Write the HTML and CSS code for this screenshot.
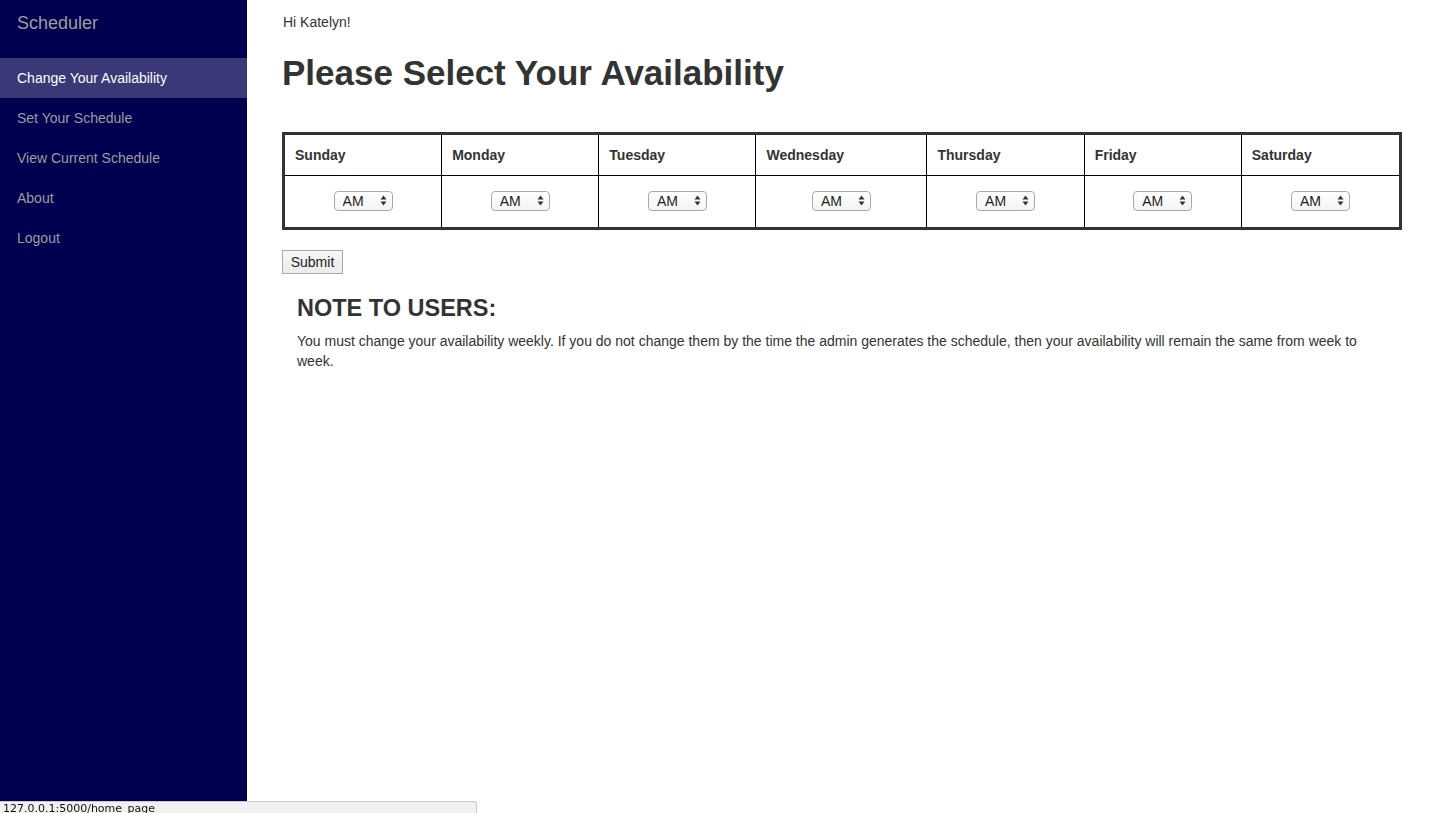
FILE: index.html
```html
<!DOCTYPE html>
<html>
<head>
<meta charset="utf-8">
<title>Scheduler</title>
<link rel="stylesheet" href="styles.css">
</head>
<body>
<div class="layout">
  <nav class="sidebar">
    <div class="brand">Scheduler</div>
    <ul class="nav">
      <li class="nav-item active">Change Your Availability</li>
      <li class="nav-item">Set Your Schedule</li>
      <li class="nav-item">View Current Schedule</li>
      <li class="nav-item">About</li>
      <li class="nav-item">Logout</li>
    </ul>
  </nav>
  <main class="main">
    <p class="greeting">Hi Katelyn!</p>
    <h1 class="title">Please Select Your Availability</h1>
    <form class="form">
      <table class="avail">
        <colgroup>
          <col class="c"><col class="c"><col class="c"><col class="c-wide"><col class="c"><col class="c"><col class="c">
        </colgroup>
        <thead>
          <tr>
            <th>Sunday</th><th>Monday</th><th>Tuesday</th><th>Wednesday</th><th>Thursday</th><th>Friday</th><th>Saturday</th>
          </tr>
        </thead>
        <tbody>
          <tr>
            <td><span class="sel"><select><option>AM</option><option>PM</option></select><svg class="arrows" viewBox="0 0 7 11" width="7" height="11"><path d="M3.5 0.5 L6.5 4.5 L0.5 4.5 Z M3.5 10.5 L6.5 6.5 L0.5 6.5 Z" fill="#333"/></svg></span></td>
            <td><span class="sel"><select><option>AM</option><option>PM</option></select><svg class="arrows" viewBox="0 0 7 11" width="7" height="11"><path d="M3.5 0.5 L6.5 4.5 L0.5 4.5 Z M3.5 10.5 L6.5 6.5 L0.5 6.5 Z" fill="#333"/></svg></span></td>
            <td><span class="sel"><select><option>AM</option><option>PM</option></select><svg class="arrows" viewBox="0 0 7 11" width="7" height="11"><path d="M3.5 0.5 L6.5 4.5 L0.5 4.5 Z M3.5 10.5 L6.5 6.5 L0.5 6.5 Z" fill="#333"/></svg></span></td>
            <td><span class="sel"><select><option>AM</option><option>PM</option></select><svg class="arrows" viewBox="0 0 7 11" width="7" height="11"><path d="M3.5 0.5 L6.5 4.5 L0.5 4.5 Z M3.5 10.5 L6.5 6.5 L0.5 6.5 Z" fill="#333"/></svg></span></td>
            <td><span class="sel"><select><option>AM</option><option>PM</option></select><svg class="arrows" viewBox="0 0 7 11" width="7" height="11"><path d="M3.5 0.5 L6.5 4.5 L0.5 4.5 Z M3.5 10.5 L6.5 6.5 L0.5 6.5 Z" fill="#333"/></svg></span></td>
            <td><span class="sel"><select><option>AM</option><option>PM</option></select><svg class="arrows" viewBox="0 0 7 11" width="7" height="11"><path d="M3.5 0.5 L6.5 4.5 L0.5 4.5 Z M3.5 10.5 L6.5 6.5 L0.5 6.5 Z" fill="#333"/></svg></span></td>
            <td><span class="sel"><select><option>AM</option><option>PM</option></select><svg class="arrows" viewBox="0 0 7 11" width="7" height="11"><path d="M3.5 0.5 L6.5 4.5 L0.5 4.5 Z M3.5 10.5 L6.5 6.5 L0.5 6.5 Z" fill="#333"/></svg></span></td>
          </tr>
        </tbody>
      </table>
      <button type="button" class="submit">Submit</button>
    </form>
    <section class="note">
      <h3 class="note-title">NOTE TO USERS:</h3>
      <p class="note-text">You must change your availability weekly. If you do not change them by the time the admin generates the schedule, then your availability will remain the same from week to week.</p>
    </section>
  </main>
</div>
<div class="statusbar">127.0.0.1:5000/home_page</div>
</body>
</html>
```

FILE: styles.css
```css
* { box-sizing: border-box; }
html, body { height: 100%; }
body {
  margin: 0;
  font-family: "Liberation Sans", Arial, Helvetica, sans-serif;
  font-size: 14px;
  line-height: 20px;
  color: #333;
  background: #fff;
}
.layout {
  display: flex;
  min-height: 100vh;
}
.sidebar {
  width: 247px;
  flex: 0 0 247px;
  background: #000050;
}
.brand {
  color: #9d9d9d;
  font-size: 18px;
  line-height: 20px;
  padding: 13px 17px 0;
  height: 58px;
}
.nav {
  list-style: none;
  margin: 0;
  padding: 0;
}
.nav-item {
  color: #9d9d9d;
  padding: 10px 17px;
  line-height: 20px;
  font-size: 14px;
}
.nav-item.active {
  color: #fff;
  background: #3a3876;
}
.main {
  flex: 1;
  padding: 12px 34px 0 35px;
}
.greeting {
  margin: 0 1px;
  font-size: 14px;
  line-height: 20px;
}
.title {
  margin: 21px 0 39px;
  font-size: 35px;
  line-height: 40px;
  font-weight: bold;
  color: #333;
}
.form { margin: 0; }
.avail {
  width: 100%;
  table-layout: fixed;
  border-collapse: separate;
  border-spacing: 0;
  border: 3px solid #333;
}
.c-wide { width: 171px; }
.avail th {
  text-align: left;
  font-weight: bold;
  font-size: 14px;
  line-height: 20px;
  padding: 10px 10px;
  border-right: 1px solid #000;
  border-bottom: 1px solid #000;
}
.avail td {
  text-align: center;
  padding: 14px 10px 16px;
  border-right: 1px solid #000;
  line-height: 20px;
}
.avail th:last-child, .avail td:last-child { border-right: none; }
.sel {
  position: relative;
  display: inline-block;
  vertical-align: middle;
  width: 59px;
  height: 20px;
}
.sel select {
  -webkit-appearance: none;
  appearance: none;
  width: 59px;
  height: 20px;
  margin: 0;
  padding: 0 0 0 8px;
  border: 1px solid #a9a9a9;
  border-radius: 4px;
  background: linear-gradient(#ffffff, #f4f4f4);
  font-family: "Liberation Sans", Arial, Helvetica, sans-serif;
  font-size: 14px;
  color: #222;
  line-height: 18px;
}
.arrows {
  position: absolute;
  right: 6px;
  top: 4px;
  pointer-events: none;
}
.submit {
  display: block;
  margin: 20px 0 0;
  width: 61px;
  height: 24px;
  padding: 0;
  font-family: "Liberation Sans", Arial, Helvetica, sans-serif;
  font-size: 14px;
  color: #222;
  background: linear-gradient(#f7f7f7, #ebebeb);
  border: 1px solid #a9a9a9;
  border-radius: 0;
}
.note {
  padding: 0 15px;
}
.note-title {
  margin: 21px 0 10px;
  font-size: 23.5px;
  line-height: 26px;
  font-weight: bold;
  color: #333;
}
.note-text {
  margin: 0;
  font-size: 14px;
  line-height: 20px;
}
.statusbar {
  position: fixed;
  left: 0;
  top: 801px;
  width: 477px;
  height: 20px;
  padding: 0 3px;
  background: #f1f1f1;
  border-top: 1px solid #c8c8c8;
  border-right: 1px solid #c8c8c8;
  border-top-right-radius: 3px;
  font-family: "DejaVu Sans", "Liberation Sans", sans-serif;
  font-size: 11px;
  line-height: 14px;
  color: #111;
}
```
